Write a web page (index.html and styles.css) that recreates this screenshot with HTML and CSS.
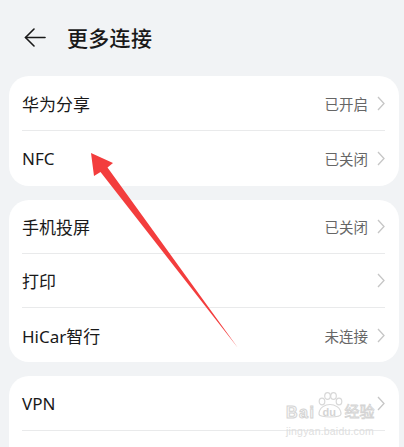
FILE: index.html
```html
<!DOCTYPE html>
<html lang="zh-CN">
<head>
    <meta charset="UTF-8">
    <meta name="viewport" content="width=device-width, initial-scale=1.0">
    <title>更多连接</title>
    <link rel="stylesheet" href="styles.css">
</head>
<body>
    <div class="page">
        <header class="header">
            <svg class="back" width="22" height="19" viewBox="0 0 22 19">
                <polyline points="10,1 1.5,9.5 10,18" fill="none" stroke="#191919" stroke-width="1.6" stroke-linecap="round" stroke-linejoin="round"/>
                <line x1="1.5" y1="9.5" x2="21" y2="9.5" stroke="#191919" stroke-width="1.6" stroke-linecap="round"/>
            </svg>
            <h1>更多连接</h1>
        </header>

        <div class="cards">
            <div class="card">
                <div class="row">
                    <span class="label">华为分享</span>
                    <span class="value">已开启</span>
                    <svg class="chev" width="8" height="15" viewBox="0 0 8 15"><polyline points="1,1 7,7.5 1,14" fill="none" stroke="#c6c6c6" stroke-width="1.3"/></svg>
                </div>
                <div class="row">
                    <span class="label">NFC</span>
                    <span class="value">已关闭</span>
                    <svg class="chev" width="8" height="15" viewBox="0 0 8 15"><polyline points="1,1 7,7.5 1,14" fill="none" stroke="#c6c6c6" stroke-width="1.3"/></svg>
                </div>
            </div>

            <div class="card compact">
                <div class="row">
                    <span class="label">手机投屏</span>
                    <span class="value">已关闭</span>
                    <svg class="chev" width="8" height="15" viewBox="0 0 8 15"><polyline points="1,1 7,7.5 1,14" fill="none" stroke="#c6c6c6" stroke-width="1.3"/></svg>
                </div>
                <div class="row">
                    <span class="label">打印</span>
                    <svg class="chev" width="8" height="15" viewBox="0 0 8 15"><polyline points="1,1 7,7.5 1,14" fill="none" stroke="#c6c6c6" stroke-width="1.3"/></svg>
                </div>
                <div class="row">
                    <span class="label">HiCar智行</span>
                    <span class="value">未连接</span>
                    <svg class="chev" width="8" height="15" viewBox="0 0 8 15"><polyline points="1,1 7,7.5 1,14" fill="none" stroke="#c6c6c6" stroke-width="1.3"/></svg>
                </div>
            </div>

            <div class="card">
                <div class="row">
                    <span class="label">VPN</span>
                    <svg class="chev" width="8" height="15" viewBox="0 0 8 15"><polyline points="1,1 7,7.5 1,14" fill="none" stroke="#c6c6c6" stroke-width="1.3"/></svg>
                </div>
                <div class="row">
                    <span class="label">&nbsp;</span>
                </div>
            </div>
        </div>

        <!-- annotation arrow -->
        <svg class="pointer" width="404" height="447" viewBox="0 0 404 447">
            <polygon points="91,153 113,163 107.5,167.5 238,348 100.5,172 94,176" fill="#f33d3d"/>
        </svg>

        <!-- watermark -->
        <div class="watermark">
            <div class="wm-top">
                <span class="wm-bai">Bai</span>
                <span class="wm-paw">
                    <svg width="26" height="27" viewBox="0 0 26 27">
                        <g fill="none" stroke="#d8d8d8" stroke-width="1.2">
                            <ellipse cx="5" cy="9.5" rx="2.8" ry="3.4"/>
                            <ellipse cx="10.5" cy="4" rx="2.8" ry="3.4"/>
                            <ellipse cx="16.5" cy="4" rx="2.8" ry="3.4"/>
                            <ellipse cx="22" cy="9.5" rx="2.8" ry="3.4"/>
                            <path d="M2,22 C2,15 9,12.5 13,12.5 C17,12.5 24,15 24,22 C24,26 2,26 2,22 Z"/>
                        </g>
                    </svg>
                    <span class="wm-du">du</span>
                </span>
                <span class="wm-jy">经验</span>
            </div>
            <div class="wm-url">jingyan.baidu.com</div>
        </div>
    </div>
</body>
</html>
```

FILE: styles.css
```css
body {
    margin: 0;
    background-color: #f1f3f5;
    font-family: 'Noto Sans', 'Noto Sans CJK SC', sans-serif;
    color: #191919;
}

.page {
    position: relative;
    width: 404px;
    height: 447px;
    overflow: hidden;
}

/* Header */
.header {
    display: flex;
    align-items: center;
    height: 74px;
    padding: 0 0 2px 24px;
    gap: 21px;
}

.header h1 {
    margin: 0;
    font-size: 21px;
    font-weight: 500;
    letter-spacing: 0.3px;
}

/* Cards */
.cards {
    display: flex;
    flex-direction: column;
    gap: 14px;
    padding: 0 5px 0 9px;
}

.card {
    background-color: #fff;
    border-radius: 20px;
}

.row {
    display: flex;
    align-items: center;
    height: 55px;
    margin: 0 14px 0 13px;
    border-bottom: 1px solid #e9eaeb;
    box-sizing: border-box;
}

.row:last-child {
    border-bottom: none;
}

.compact .row {
    height: 54px;
}

.label {
    flex: 1;
    font-size: 17px;
}

.value {
    font-size: 14.5px;
    color: #666;
    margin-right: 9px;
}

.chev {
    display: block;
}

/* Overlay arrow */
.pointer {
    position: absolute;
    left: 0;
    top: 0;
    pointer-events: none;
}

/* Watermark */
.watermark {
    position: absolute;
    left: 286px;
    top: 392px;
}

.wm-top {
    display: flex;
    align-items: flex-end;
    height: 27px;
}

.wm-bai {
    font-family: 'Liberation Sans', sans-serif;
    font-size: 16px;
    font-weight: bold;
    line-height: 13px;
    letter-spacing: 1.5px;
    color: #fafafa;
    -webkit-text-stroke: 1px #d4d4d4;
}

.wm-paw {
    position: relative;
    width: 26px;
    height: 27px;
    margin: 0 1px 0 2px;
}

.wm-du {
    position: absolute;
    left: 5px;
    bottom: 1px;
    font-family: 'Liberation Sans', sans-serif;
    font-size: 11px;
    font-weight: bold;
    color: #d4d4d4;
}

.wm-jy {
    font-size: 15px;
    line-height: 15px;
    color: #fafafa;
    -webkit-text-stroke: 0.8px #d4d4d4;
}

.wm-url {
    margin-top: 6px;
    font-family: 'Liberation Sans', sans-serif;
    font-size: 10.5px;
    color: #dedede;
    letter-spacing: 0.2px;
}
```
